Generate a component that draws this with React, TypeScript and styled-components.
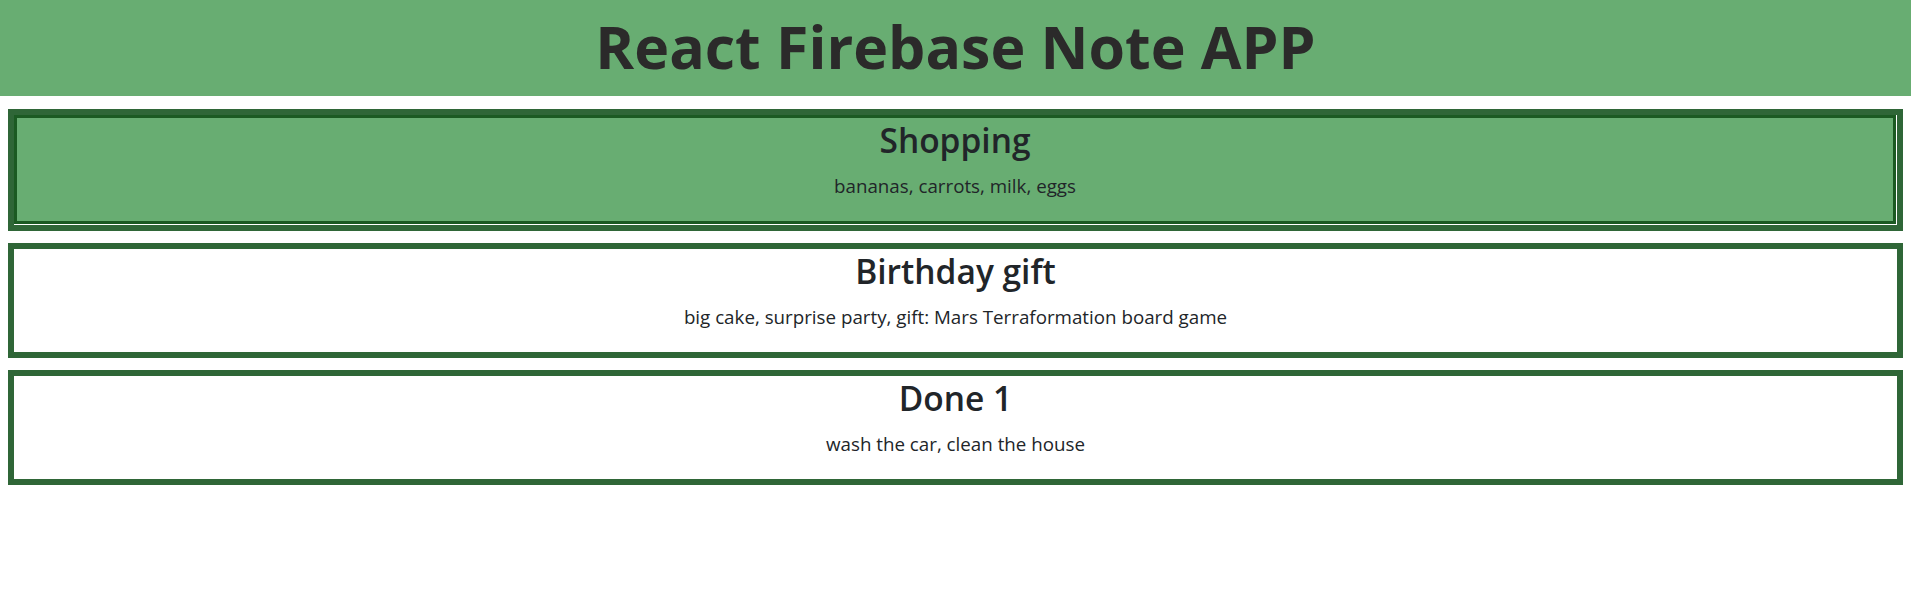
import React from "react";
import styled, { createGlobalStyle } from "styled-components";

const Global = createGlobalStyle`
  html, body { margin: 0; padding: 0; background: #ffffff; }
  body { font-family: "Open Sans", "Noto Sans", sans-serif; color: #212529; }
`;

const Header = styled.header`
  height: 96px;
  box-sizing: border-box;
  padding-bottom: 4px;
  background: #68ad72;
  display: flex;
  align-items: center;
  justify-content: center;
`;

const AppTitle = styled.h1`
  margin: 0;
  font-family: "Open Sans", "Noto Sans", sans-serif;
  font-weight: 700;
  font-size: 59px;
  line-height: 59px;
  color: #2b2a2a;
`;

const List = styled.main`
  display: flex;
  flex-direction: column;
  gap: 12px;
  padding: 13px 8px;
`;

const Card = styled.article<{ $active?: boolean }>`
  border: 6px solid #2f6637;
  background: #ffffff;
  padding: ${(p) => (p.$active ? "0 1px 1px 0" : "0")};
`;

const CardInner = styled.div<{ $active?: boolean }>`
  height: 103px;
  box-sizing: content-box;
  border: ${(p) => (p.$active ? "3px solid #1b5a22" : "0")};
  background: ${(p) => (p.$active ? "#68ad72" : "#ffffff")};
  display: flex;
  flex-direction: column;
  align-items: center;
  text-align: center;
`;

const NoteTitle = styled.h3`
  margin: 0;
  padding-top: 2px;
  font-family: "Open Sans", "Noto Sans", sans-serif;
  font-weight: 600;
  font-size: 33.5px;
  line-height: 40px;
  color: #212529;
`;

const NoteBody = styled.p`
  margin: 14px 0 0;
  font-family: "Open Sans", "Noto Sans", sans-serif;
  font-weight: 400;
  font-size: 18.75px;
  line-height: 24px;
  color: #212529;
`;

const notes = [
  { id: 1, title: "Shopping", body: "bananas, carrots, milk, eggs", active: true },
  { id: 2, title: "Birthday gift", body: "big cake, surprise party, gift: Mars Terraformation board game" },
  { id: 3, title: "Done 1", body: "wash the car, clean the house" },
];

export default function App() {
  return (
    <>
      <Global />
      <Header>
        <AppTitle>React Firebase Note APP</AppTitle>
      </Header>
      <List>
        {notes.map((n) => (
          <Card key={n.id} $active={n.active}>
            <CardInner $active={n.active}>
              <NoteTitle>{n.title}</NoteTitle>
              <NoteBody>{n.body}</NoteBody>
            </CardInner>
          </Card>
        ))}
      </List>
    </>
  );
}
